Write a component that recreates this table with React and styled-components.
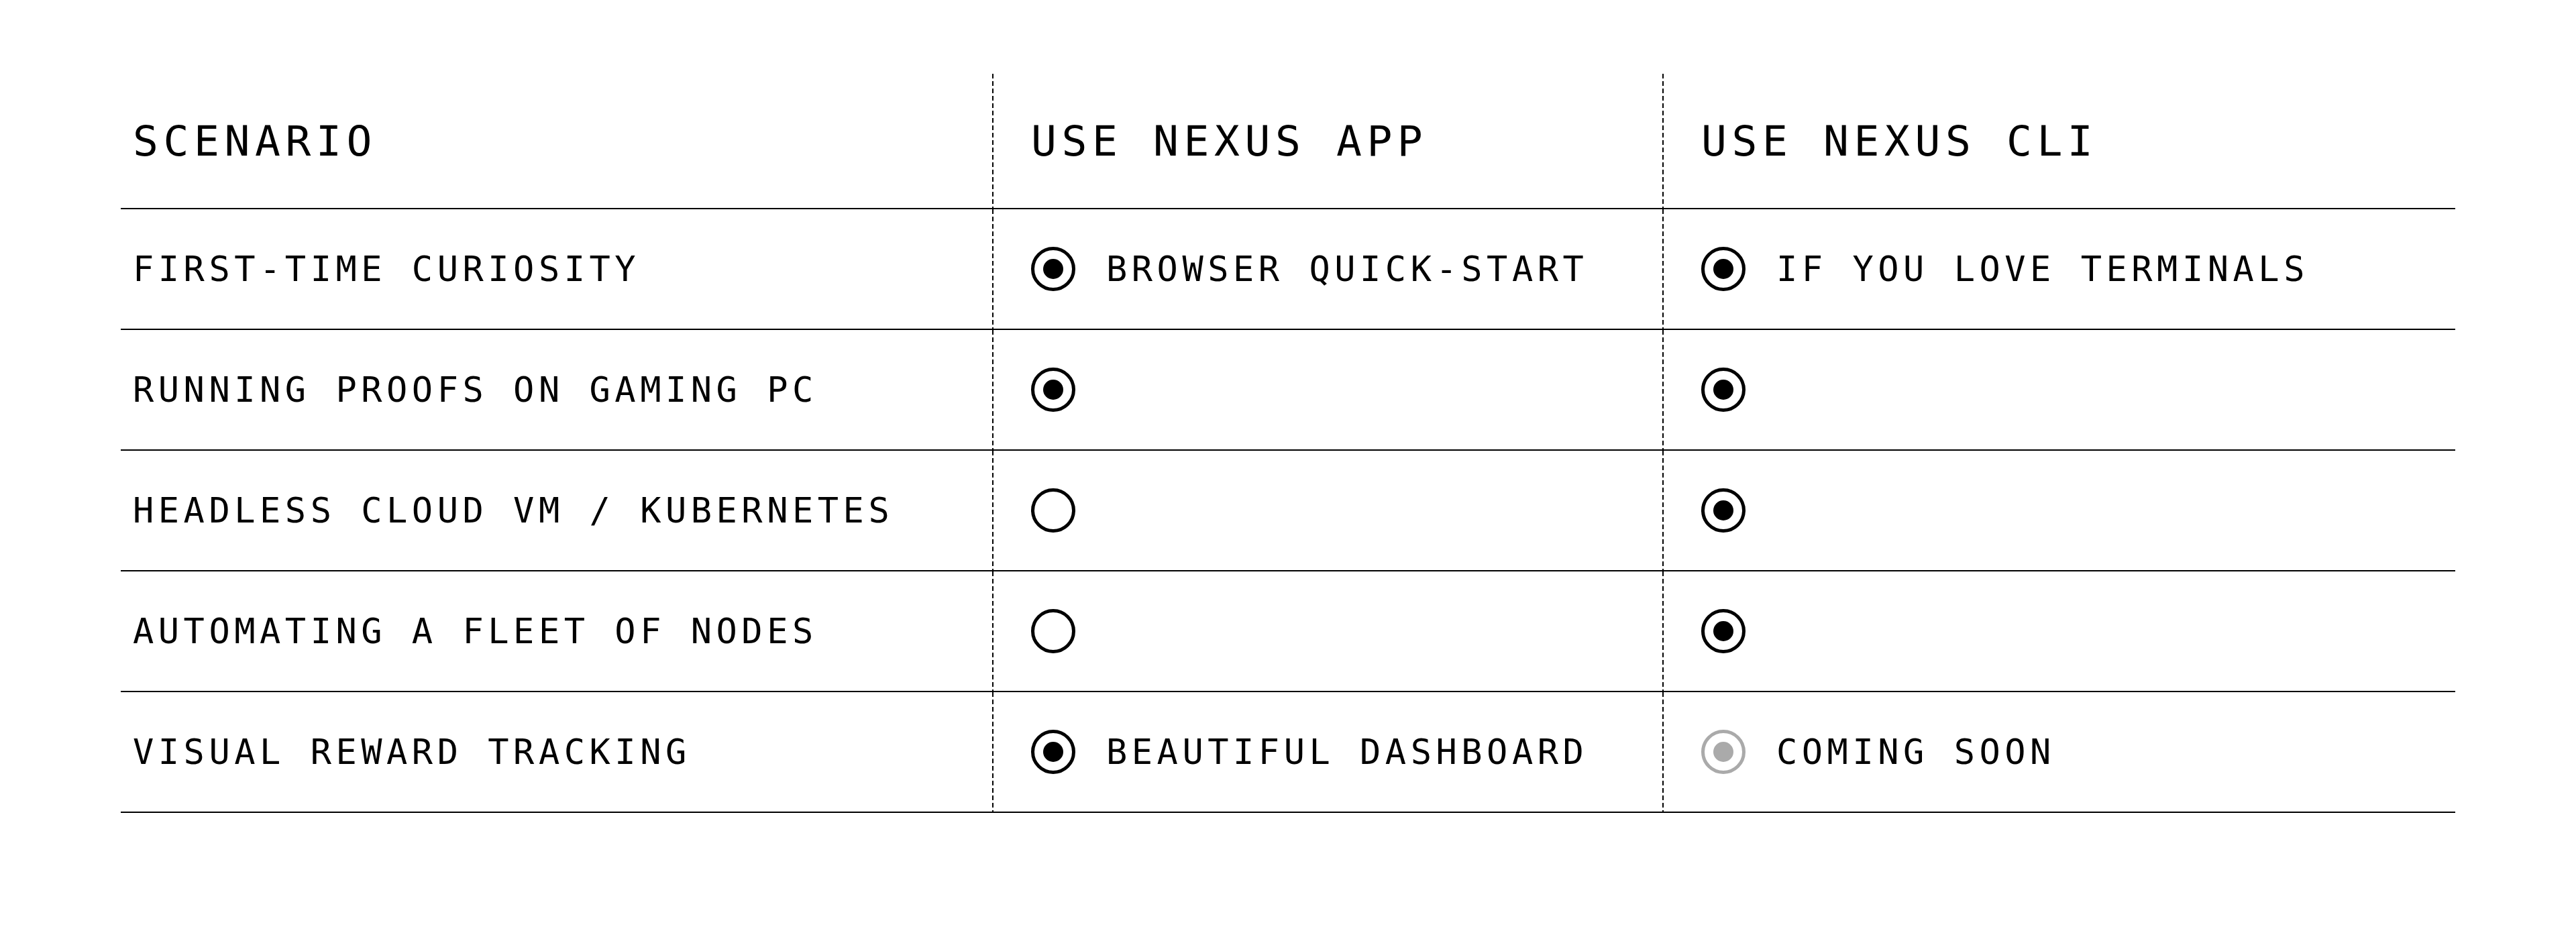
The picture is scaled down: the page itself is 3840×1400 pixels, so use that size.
import React from 'react';
import styled, {createGlobalStyle} from 'styled-components';

const rows = [
  {scenario: 'FIRST-TIME CURIOSITY', app: ['on', 'BROWSER QUICK-START'], cli: ['on', 'IF YOU LOVE TERMINALS']},
  {scenario: 'RUNNING PROOFS ON GAMING PC', app: ['on'], cli: ['on']},
  {scenario: 'HEADLESS CLOUD VM / KUBERNETES', app: ['off'], cli: ['on']},
  {scenario: 'AUTOMATING A FLEET OF NODES', app: ['off'], cli: ['on']},
  {scenario: 'VISUAL REWARD TRACKING', app: ['on', 'BEAUTIFUL DASHBOARD'], cli: ['soon', 'COMING SOON']},
]

function Option({value}) {
  const [state, label] = value
  return (
    <Choice>
      <Radio $state={state} />
      {label && <Label>{label}</Label>}
    </Choice>
  )
}

function App() {
  return (
    <Page>
      <Global />
      <Table>
        <HeadCell $first>SCENARIO</HeadCell>
        <HeadCell>USE NEXUS APP</HeadCell>
        <HeadCell>USE NEXUS CLI</HeadCell>

        {rows.map(r => (
          <React.Fragment key={r.scenario}>
            <Cell $first><Label>{r.scenario}</Label></Cell>
            <Cell><Option value={r.app} /></Cell>
            <Cell><Option value={r.cli} /></Cell>
          </React.Fragment>
        ))}
      </Table>
    </Page>
  );
}

const Global = createGlobalStyle`
  body {
    margin: 0;
    background: #fff;
    color: #000;
    font-family: "DejaVu Sans Mono", "Liberation Mono", monospace;
  }
`
const Page = styled.div`
  width: 100%;
  min-height: 1400px;
  padding: 110px 180px;
  box-sizing: border-box;
`
const Table = styled.div`
  display: grid;
  grid-template-columns: 1299px 999px 1fr;
`
const divider = `
  background-image: repeating-linear-gradient(to bottom, #000 0 7px, transparent 7px 11px);
  background-size: 2px 100%;
  background-repeat: no-repeat;
  background-position: left top;
`
const HeadCell = styled.div`
  height: 200px;
  display: flex;
  align-items: center;
  padding-left: ${p => p.$first ? '18px' : '58px'};
  border-bottom: 2px solid #000;
  font-size: 63px;
  line-height: 1;
  letter-spacing: 0.12em;
  ${p => !p.$first && divider}
`
const Cell = styled.div`
  height: 178px;
  display: flex;
  align-items: center;
  padding-left: ${p => p.$first ? '18px' : '58px'};
  border-bottom: 2px solid #000;
  ${p => !p.$first && divider}
`
const Choice = styled.div`
  display: flex;
  align-items: center;
  gap: 46px;
`
const Label = styled.span`
  font-size: 52px;
  line-height: 1;
  letter-spacing: 0.125em;
  white-space: nowrap;
`
const Radio = styled.span`
  width: 66px;
  height: 66px;
  flex: none;
  box-sizing: border-box;
  border-radius: 50%;
  border: 5px solid ${p => p.$state === 'soon' ? '#aaa' : '#000'};
  display: flex;
  align-items: center;
  justify-content: center;
  &::after {
    content: '';
    display: ${p => p.$state === 'off' ? 'none' : 'block'};
    width: 30px;
    height: 30px;
    border-radius: 50%;
    background: ${p => p.$state === 'soon' ? '#aaa' : '#000'};
  }
`

export default App;
